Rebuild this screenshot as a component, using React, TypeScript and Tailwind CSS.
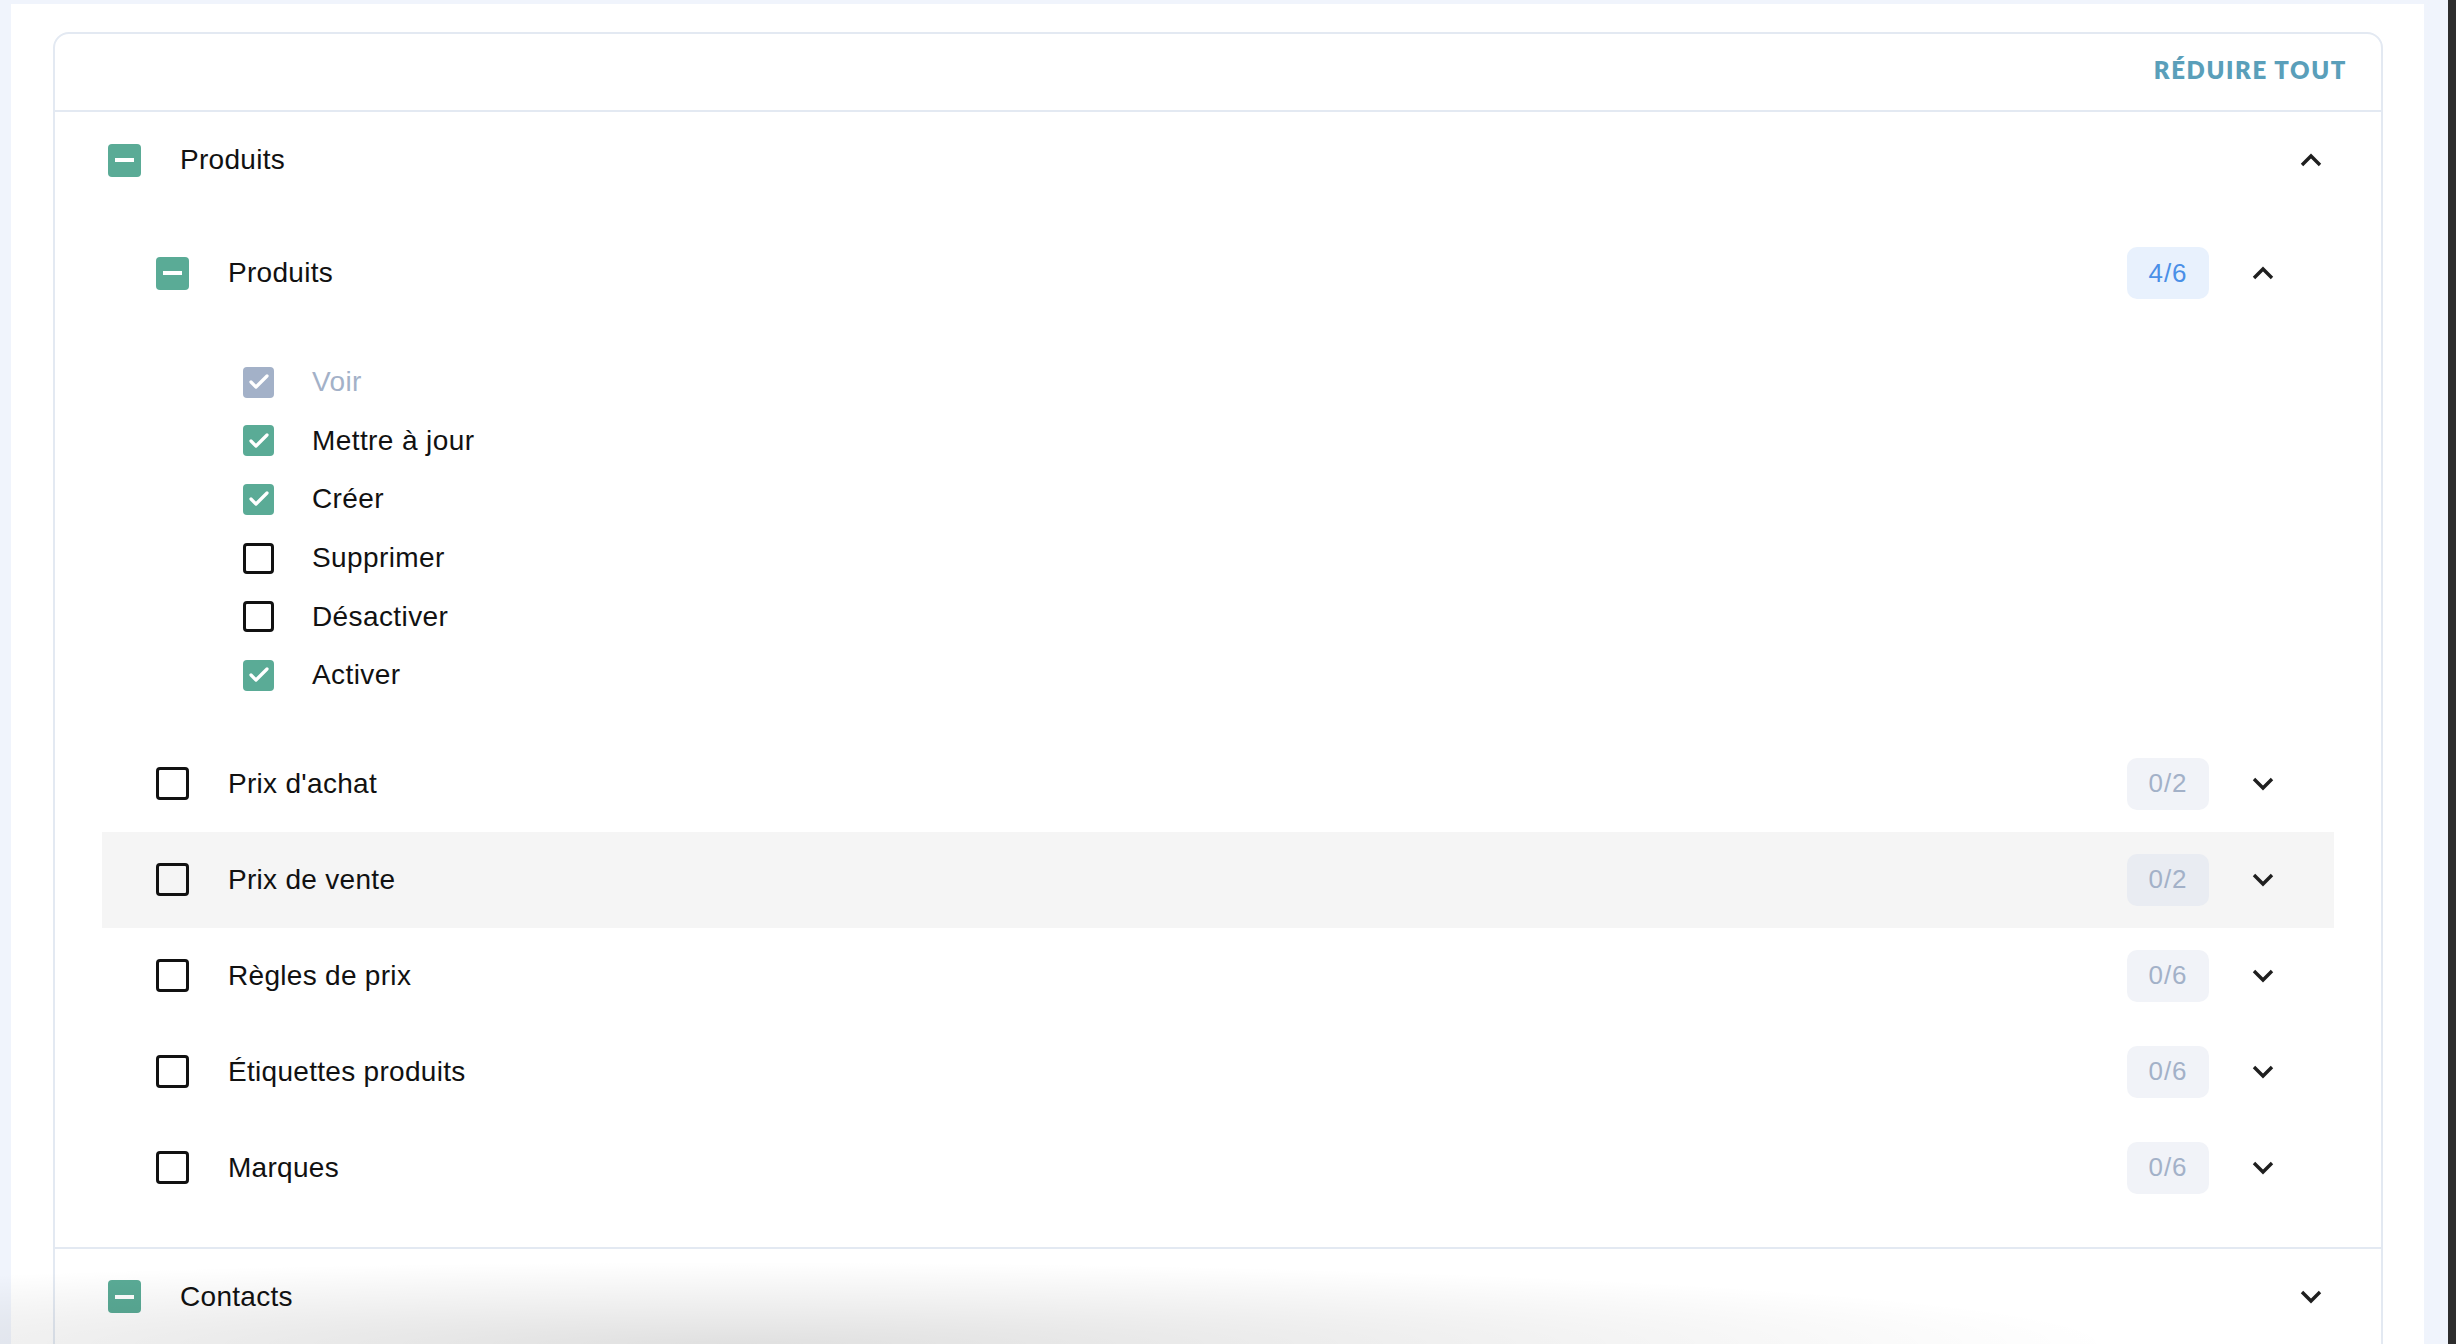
import { Check } from "lucide-react";

type ItemState = "disabled" | "checked" | "unchecked";

const items: { label: string; state: ItemState }[] = [
  { label: "Voir", state: "disabled" },
  { label: "Mettre à jour", state: "checked" },
  { label: "Créer", state: "checked" },
  { label: "Supprimer", state: "unchecked" },
  { label: "Désactiver", state: "unchecked" },
  { label: "Activer", state: "checked" },
];

const groups = [
  { label: "Prix d'achat", count: "0/2", hover: false },
  { label: "Prix de vente", count: "0/2", hover: true },
  { label: "Règles de prix", count: "0/6", hover: false },
  { label: "Étiquettes produits", count: "0/6", hover: false },
  { label: "Marques", count: "0/6", hover: false },
];

function Chevron({ up = false }: { up?: boolean }) {
  return (
    <span className="flex h-[34px] w-[34px] items-center justify-center">
      <svg width="22" height="14" viewBox="0 0 22 14" fill="none">
        <path
          d={up ? "M2 12 L11 3 L20 12" : "M2 2 L11 11 L20 2"}
          stroke="#1f1f1f"
          strokeWidth="3.4"
          strokeLinejoin="miter"
        />
      </svg>
    </span>
  );
}

function Partial() {
  return (
    <span className="flex h-[33px] w-[33px] shrink-0 items-center justify-center rounded-[4px] bg-[#5aab96]">
      <span className="h-[4px] w-[19px] bg-white" />
    </span>
  );
}

function Empty() {
  return <span className="h-[33px] w-[33px] shrink-0 rounded-[4px] border-[3px] border-[#111]" />;
}

function ItemBox({ state }: { state: ItemState }) {
  if (state === "unchecked") {
    return <span className="h-[31px] w-[31px] shrink-0 rounded-[4px] border-[3px] border-[#111]" />;
  }
  return (
    <span
      className={
        state === "disabled"
          ? "flex h-[31px] w-[31px] shrink-0 items-center justify-center rounded-[4px] bg-[#a3b1c8]"
          : "flex h-[31px] w-[31px] shrink-0 items-center justify-center rounded-[4px] bg-[#5aab96]"
      }
    >
      <Check size={24} strokeWidth={3.2} color="#fff" />
    </span>
  );
}

function Badge({ count, active = false, hover = false }: { count: string; active?: boolean; hover?: boolean }) {
  const tone = active
    ? "bg-[#e8f1fd] text-[#4a8fe7]"
    : hover
      ? "bg-[#e9ecf2] text-[#a3b1c8]"
      : "bg-[#f1f3f8] text-[#a3b1c8]";
  return (
    <span
      className={`flex h-[52px] w-[82px] items-center justify-center rounded-[10px] text-[26px] tracking-[1px] ${tone}`}
    >
      {count}
    </span>
  );
}

export default function App() {
  return (
    <div className="relative flex h-[1344px] w-full overflow-hidden bg-[#f0f4fc] font-['Liberation_Sans',Arial,sans-serif] text-[#111]">
      <div className="flex-1 pl-[11px] pr-[24px] pt-[4px]">
        <div className="h-full bg-white pl-[42px] pr-[41px] pt-[28px]">
          <div className="rounded-t-[16px] border-2 border-[#e3e9f2]">
            {/* header */}
            <div className="flex h-[78px] items-center justify-end border-b-2 border-[#e3e9f2] pb-[4px] pr-[34px]">
              <span className="font-['Lato',sans-serif] text-[24px] font-extrabold uppercase tracking-[1.6px] text-[#5a9fba]">
                Réduire tout
              </span>
            </div>

            {/* Produits section */}
            <div className="border-b-2 border-[#e3e9f2] pb-[31px]">
              <div className="flex h-[96px] items-center px-[53px]">
                <Partial />
                <span className="ml-[39px] flex-1 text-[28px] tracking-[0.3px]">Produits</span>
                <Chevron up />
              </div>

              <div className="mx-[47px] pt-[17px]">
                <div className="flex h-[96px] items-center pl-[54px] pr-[54px]">
                  <Partial />
                  <span className="ml-[39px] flex-1 text-[28px] tracking-[0.3px]">Produits</span>
                  <Badge count="4/6" active />
                  <span className="ml-[37px]">
                    <Chevron up />
                  </span>
                </div>

                <div className="pb-[31px] pt-[32px]">
                  {items.map((it) => (
                    <div key={it.label} className="flex h-[58.6px] items-center pl-[141px]">
                      <ItemBox state={it.state} />
                      <span
                        className={
                          it.state === "disabled"
                            ? "ml-[38px] text-[28px] tracking-[0.4px] text-[#a3b1c8]"
                            : "ml-[38px] text-[28px] tracking-[0.4px]"
                        }
                      >
                        {it.label}
                      </span>
                    </div>
                  ))}
                </div>

                {groups.map((g) => (
                  <div
                    key={g.label}
                    className={
                      g.hover
                        ? "flex h-[96px] items-center bg-[#f5f5f5] pl-[54px] pr-[54px]"
                        : "flex h-[96px] items-center pl-[54px] pr-[54px]"
                    }
                  >
                    <Empty />
                    <span className="ml-[39px] flex-1 text-[28px] tracking-[0.3px]">{g.label}</span>
                    <Badge count={g.count} hover={g.hover} />
                    <span className="ml-[37px]">
                      <Chevron />
                    </span>
                  </div>
                ))}
              </div>
            </div>

            {/* Contacts section */}
            <div className="flex h-[96px] items-center px-[53px]">
              <Partial />
              <span className="ml-[39px] flex-1 text-[28px] tracking-[0.3px]">Contacts</span>
              <Chevron />
            </div>
          </div>
        </div>
      </div>
      <div className="w-[8px] bg-[#2d2d2d]" />

      {/* bottom fade overlay */}
      <div className="pointer-events-none absolute bottom-0 left-0 right-0 h-[110px] bg-[radial-gradient(75%_100%_at_30%_100%,rgba(0,0,0,0.12),rgba(0,0,0,0)_75%)]" />
    </div>
  );
}
